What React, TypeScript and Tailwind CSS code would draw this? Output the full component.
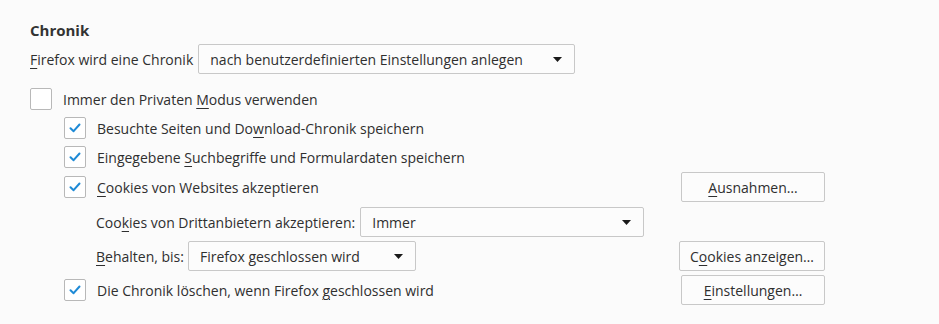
import type { ReactNode } from "react";

const font = { fontFamily: '"Open Sans", "Noto Sans", sans-serif' };

const Key = ({ children }: { children: ReactNode }) => (
  <span className="underline underline-offset-[3px] decoration-1">{children}</span>
);

const Checkbox = ({ checked }: { checked: boolean }) => (
  <span className="flex h-[22px] w-[22px] shrink-0 items-center justify-center rounded-[2px] border border-[#b8b8b8] bg-white">
    {checked && (
      <svg width="12" height="10" viewBox="0 0 12 10" fill="none">
        <path d="M1.5 5.2 L4.6 8.2 L10.5 1.5" stroke="#1e8ad6" strokeWidth="2" strokeLinecap="round" strokeLinejoin="round" />
      </svg>
    )}
  </span>
);

const Select = ({ value, width }: { value: string; width: string }) => (
  <div className={`flex h-[30px] ${width} items-center justify-between rounded-[2px] border border-[#c8c8c8] bg-[#fcfcfc] pl-[11px] pr-[12px]`}>
    <span>{value}</span>
    <svg width="9" height="5" viewBox="0 0 9 5">
      <path d="M0 0 H9 L4.5 5 Z" fill="#1a1a1a" />
    </svg>
  </div>
);

const Button = ({ children }: { children: ReactNode }) => (
  <button
    type="button"
    className="flex h-[30px] min-w-[144px] items-center justify-center rounded-[2px] border border-[#c8c8c8] bg-[#fcfcfc] px-[10px] text-[#2f2f2f]"
  >
    {children}
  </button>
);

const CheckRow = ({ checked, children, indent }: { checked: boolean; children: ReactNode; indent?: boolean }) => (
  <div className={`flex items-center gap-[11px] ${indent ? "pl-[34px]" : ""}`}>
    <Checkbox checked={checked} />
    <span>{children}</span>
  </div>
);

export default function App() {
  return (
    <div className="h-[324px] w-[939px] bg-[#fbfbfb] text-[14px] text-[#2f2f2f]" style={font}>
      <div className="flex w-[825px] flex-col pl-[30px] pt-[20px]">
        <h2 className="flex h-[20px] items-center text-[15px] font-bold text-[#333]">Chronik</h2>

        <div className="mt-[4px] flex h-[30px] items-center gap-[5px]">
          <span>
            <Key>F</Key>irefox wird eine Chronik
          </span>
          <Select value="nach benutzerdefinierten Einstellungen anlegen" width="w-[377px]" />
        </div>

        <div className="mt-[14px] flex h-[22px] items-center">
          <CheckRow checked={false}>
            Immer den Privaten <Key>M</Key>odus verwenden
          </CheckRow>
        </div>

        <div className="mt-[7px] flex h-[22px] items-center">
          <CheckRow checked indent>
            Besuchte Seiten und Do<Key>w</Key>nload-Chronik speichern
          </CheckRow>
        </div>

        <div className="mt-[7px] flex h-[22px] items-center">
          <CheckRow checked indent>
            Eingegebene <Key>S</Key>uchbegriffe und Formulardaten speichern
          </CheckRow>
        </div>

        <div className="mt-[4px] flex h-[30px] items-center justify-between">
          <CheckRow checked indent>
            <Key>C</Key>ookies von Websites akzeptieren
          </CheckRow>
          <Button>
            <Key>A</Key>usnahmen…
          </Button>
        </div>

        <div className="mt-[5px] flex h-[30px] items-center gap-[5px] pl-[66px]">
          <span>
            Coo<Key>k</Key>ies von Drittanbietern akzeptieren:
          </span>
          <Select value="Immer" width="w-[284px]" />
        </div>

        <div className="mt-[4px] flex h-[30px] items-center justify-between">
          <div className="flex items-center gap-[4px] pl-[66px]">
            <span>
              <Key>B</Key>ehalten, bis:
            </span>
            <Select value="Firefox geschlossen wird" width="w-[228px]" />
          </div>
          <Button>
            C<Key>o</Key>okies anzeigen…
          </Button>
        </div>

        <div className="mt-[4px] flex h-[30px] items-center justify-between">
          <CheckRow checked indent>
            Die Chronik löschen, wenn Firefox <Key>g</Key>eschlossen wird
          </CheckRow>
          <Button>
            <Key>E</Key>instellungen…
          </Button>
        </div>
      </div>
    </div>
  );
}
